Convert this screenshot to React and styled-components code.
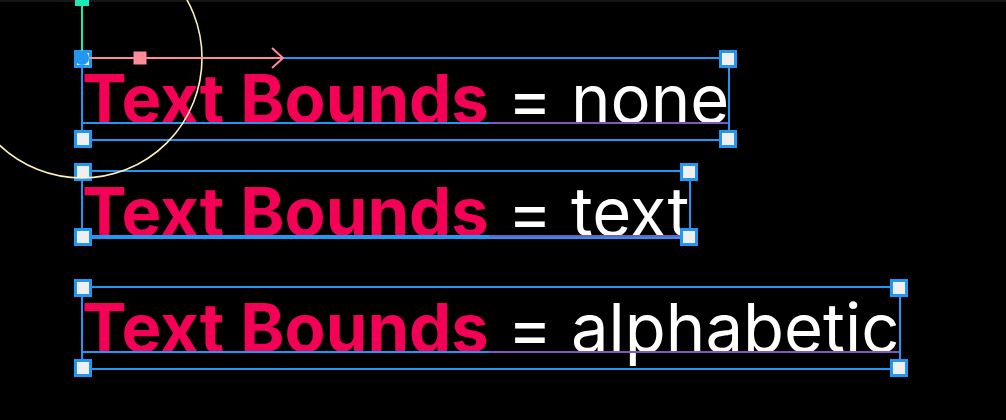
import React from "react";
import styled, { createGlobalStyle } from "styled-components";

const Global = createGlobalStyle`
  html, body { margin: 0; padding: 0; background: #000; }
  body { font-family: Inter, "Noto Sans", sans-serif; }
`;

const BLUE = "#2196f3";
const PURPLE = "#7e57c2";
const PINK = "#f50057";

const Canvas = styled.main`
  width: 1006px;
  height: 420px;
  box-sizing: border-box;
  padding: 58px 0 0 82px;
  background: linear-gradient(#161616 0 2px, #000 2px);
  overflow: hidden;
  display: flex;
  flex-direction: column;
  align-items: flex-start;
`;

const Node = styled.div`
  position: relative;
  margin-top: ${(p) => p.$gap || 0}px;
  font-size: 67px;
  line-height: 82px;
  white-space: pre;
`;

const Run = styled.span`
  position: relative;
  font-weight: ${(p) => (p.$bold ? 700 : 400)};
  color: ${(p) => (p.$bold ? PINK : "#ffffff")};
  &::after {
    content: "";
    position: absolute;
    left: 0;
    right: 0;
    top: calc(0.96875em - 1px);
    height: 2px;
    background: ${(p) => (p.$bold ? BLUE : PURPLE)};
  }
`;

const Frame = styled.div`
  position: absolute;
  left: -1px;
  right: -1px;
  top: -1px;
  ${(p) => (p.$toBaseline ? "height: calc(0.96875em + 4px);" : "bottom: -1px;")}
  border: 2px solid ${BLUE};
  box-sizing: border-box;
  pointer-events: none;
`;

const Handle = styled.span`
  position: absolute;
  width: 18px;
  height: 18px;
  box-sizing: border-box;
  border: 3px solid ${BLUE};
  background: #efefef;
  ${(p) => (p.$y === "top" ? "top: -9px;" : "bottom: -9px;")}
  ${(p) => (p.$x === "left" ? "left: -9px;" : "right: -9px;")}
`;

const Gizmo = styled.svg`
  position: absolute;
  left: 0;
  top: 0;
  width: 1px;
  height: 1px;
  overflow: visible;
  z-index: 3;
`;

function TextNode({ value, gap, toBaseline, gizmo }) {
  return (
    <Node $gap={gap}>
      <Run $bold>Text Bounds</Run>
      <Run>{` = ${value}`}</Run>
      <Frame $toBaseline={toBaseline}>
        <Handle $x="left" $y="top" />
        <Handle $x="right" $y="top" />
        <Handle $x="left" $y="bottom" />
        <Handle $x="right" $y="bottom" />
      </Frame>
      {gizmo && (
        <Gizmo>
          <circle cx="0" cy="0" r="120" fill="none" stroke="#fff0b8" strokeWidth="1.6" />
          <line x1="0" y1="-80" x2="0" y2="0" stroke="#1de9b6" strokeWidth="2" />
          <rect x="-7" y="-66" width="14" height="14" fill="#1de9b6" />
          <line x1="0" y1="0" x2="201" y2="0" stroke="#ff8a9a" strokeWidth="2" />
          <polyline points="190,-10 201,0 190,10" fill="none" stroke="#ff8a9a" strokeWidth="2" />
          <rect x="51.5" y="-6.5" width="13" height="13" fill="#ff8a9a" />
          <circle cx="0" cy="0" r="7" fill="#2196f3" />
        </Gizmo>
      )}
    </Node>
  );
}

export default function App() {
  return (
    <>
      <Global />
      <Canvas>
        <TextNode value="none" gizmo />
        <TextNode value="text" gap={31} toBaseline />
        <TextNode value="alphabetic" gap={34} />
      </Canvas>
    </>
  );
}
